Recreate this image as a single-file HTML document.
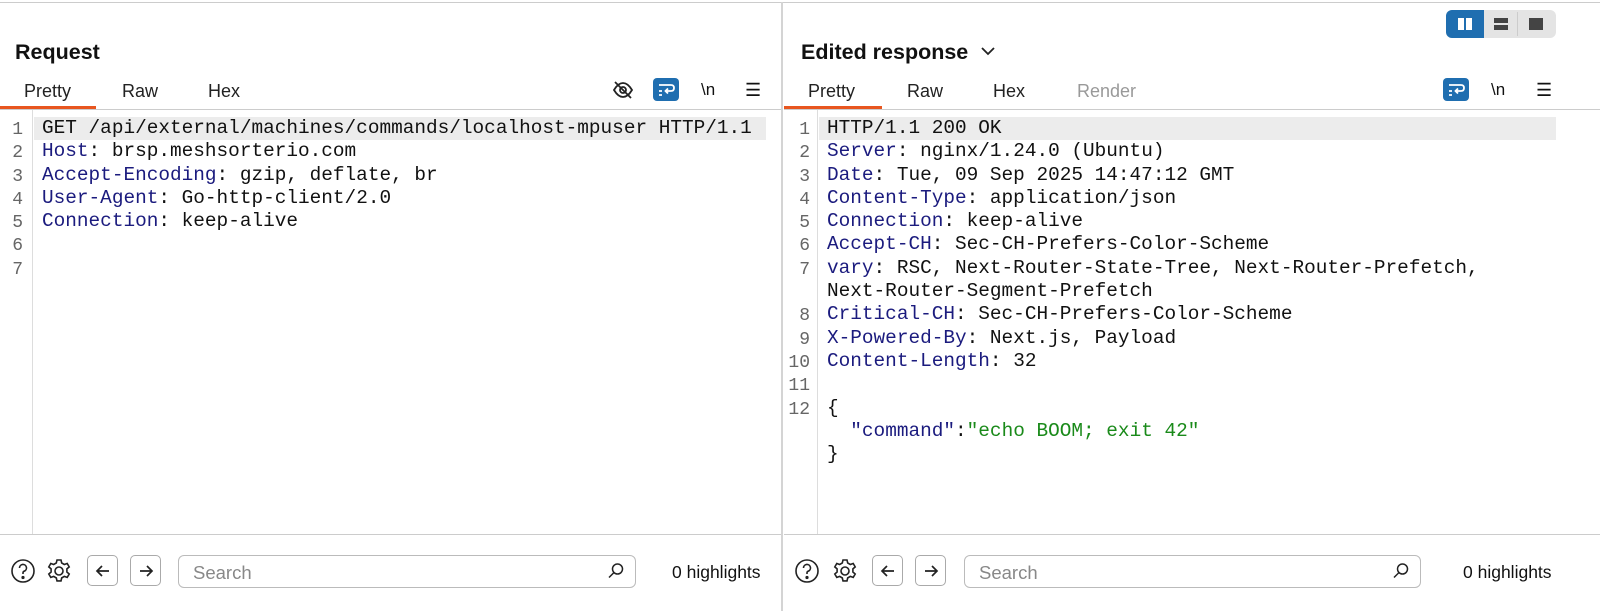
<!DOCTYPE html>
<html><head><meta charset="utf-8"><style>
*{margin:0;padding:0;box-sizing:border-box}
body{width:1600px;height:611px;background:#fff;position:relative;overflow:hidden;font-family:"Liberation Sans",sans-serif;color:#111}
.a{position:absolute}
.hl{background:#ececec}
.code{font-family:"Liberation Mono",monospace;font-size:19.4px;line-height:23.3px;white-space:pre;color:#111}
.k{color:#1b1b7e}
.s{color:#1a8a1a}
.ln{font-family:"Liberation Mono",monospace;font-size:18px;line-height:23.3px;color:#666;text-align:right;white-space:pre}
.tab{font-size:18px;color:#222;top:81px}
.title{font-size:21.5px;font-weight:bold;top:40px;color:#111}
.btn{border:1px solid #aaa;border-radius:5px;width:31px;height:31px;background:#fff;top:555px}
.search{border:1px solid #bbb;border-radius:6px;height:33px;top:555px;font-size:18.5px;color:#888;padding:6px 14px}
.hi{font-size:17.5px;top:562px;color:#111}
</style></head><body>
<div class="a" style="left:0;top:2px;width:1600px;height:1px;background:#ccc"></div>
<div class="a" style="left:781px;top:2px;width:2px;height:609px;background:#d4d4d4"></div>

<!-- LEFT -->
<div class="a title" style="left:15px">Request</div>
<div class="a tab" style="left:24px">Pretty</div>
<div class="a tab" style="left:122px">Raw</div>
<div class="a tab" style="left:208px">Hex</div>
<div class="a" style="left:0;top:106px;width:96px;height:3px;background:#e8561f"></div>
<div class="a" style="left:0;top:109px;width:781px;height:1px;background:#ccc"></div>
<svg class="a" style="left:612px;top:79px" width="22" height="22" viewBox="0 0 22 22" fill="none" stroke="#222" stroke-width="1.8"><path d="M2 11c3-5 6-7 9-7s6 2 9 7c-3 5-6 7-9 7s-6-2-9-7z"/><circle cx="11" cy="11" r="3"/><path d="M3 3l16 16"/></svg>
<div class="a" style="left:653px;top:78px;width:26px;height:23px;background:#1f6eb0;border-radius:4px"></div>
<svg class="a" style="left:656px;top:80px" width="20" height="19" viewBox="0 0 20 19" fill="none" stroke="#fff" stroke-width="1.8"><path d="M3 5h12c2 0 3 1 3 3s-1 3-3 3h-5M12 8.5l-2.5 2.5 2.5 2.5M3 11h3M3 15h3"/></svg>
<div class="a" style="left:701px;top:80px;font-size:17px">\n</div>
<div class="a" style="left:745px;top:80px;font-size:18px">☰</div>

<div class="a" style="left:32px;top:110px;width:1px;height:425px;background:#ddd"></div>
<div class="a hl" style="left:34px;top:117px;width:732px;height:23px"></div>
<div class="a ln" style="left:0;top:119px;width:23px">1
2
3
4
5
6
7</div>
<div class="a code" style="left:42px;top:117px">GET /api/external/machines/commands/localhost-mpuser HTTP/1.1
<span class="k">Host</span>: brsp.meshsorterio.com
<span class="k">Accept-Encoding</span>: gzip, deflate, br
<span class="k">User-Agent</span>: Go-http-client/2.0
<span class="k">Connection</span>: keep-alive</div>
<div class="a" style="left:0;top:534px;width:781px;height:1px;background:#ccc"></div>

<svg class="a" style="left:10px;top:558px" width="26" height="26" viewBox="0 0 26 26" fill="none" stroke="#222" stroke-width="1.6"><circle cx="13" cy="13" r="11"/><path d="M9.5 10a3.5 3.5 0 1 1 4.5 3.3c-.8.3-1 .9-1 1.7v1"/><circle cx="13" cy="19.5" r=".8" fill="#222"/></svg>
<svg class="a" style="left:45px;top:557px" width="28" height="28" viewBox="0 0 28 28" fill="none" stroke="#222" stroke-width="1.6"><path d="M12 3h4l.7 3 2.6 1.5 2.9-1 2 3.4-2.3 2 0 3.1 2.3 2-2 3.4-2.9-1-2.6 1.5-.7 3h-4l-.7-3-2.6-1.5-2.9 1-2-3.4 2.3-2 0-3.1-2.3-2 2-3.4 2.9 1 2.6-1.5z"/><circle cx="14" cy="14" r="4"/></svg>
<div class="a btn" style="left:87px"></div>
<svg class="a" style="left:93px;top:561px" width="20" height="20" viewBox="0 0 20 20" fill="none" stroke="#222" stroke-width="1.7"><path d="M16 10H4M9 5l-5 5 5 5"/></svg>
<div class="a btn" style="left:130px"></div>
<svg class="a" style="left:136px;top:561px" width="20" height="20" viewBox="0 0 20 20" fill="none" stroke="#222" stroke-width="1.7"><path d="M4 10h12M11 5l5 5-5 5"/></svg>
<div class="a search" style="left:178px;width:458px">Search</div>
<svg class="a" style="left:606px;top:561px" width="20" height="20" viewBox="0 0 20 20" fill="none" stroke="#222" stroke-width="1.5"><circle cx="11.5" cy="8" r="5"/><path d="M8 11.5l-5 5"/></svg>
<div class="a hi" style="left:672px">0 highlights</div>

<!-- RIGHT -->
<div class="a" style="left:1446px;top:10px;width:110px;height:28px;background:#e4e4e4;border-radius:6px"></div>
<div class="a" style="left:1446px;top:10px;width:38px;height:28px;background:#1f6eb0;border-radius:6px 0 0 6px"></div>
<div class="a" style="left:1517px;top:12px;width:1px;height:24px;background:#ccc"></div>
<div class="a" style="left:1458px;top:18px;width:6px;height:12px;background:#fff"></div>
<div class="a" style="left:1466px;top:18px;width:6px;height:12px;background:#fff"></div>
<div class="a" style="left:1494px;top:18px;width:14px;height:5px;background:#444"></div>
<div class="a" style="left:1494px;top:25px;width:14px;height:5px;background:#444"></div>
<div class="a" style="left:1529px;top:18px;width:14px;height:12px;background:#444"></div>

<div class="a title" style="left:801px">Edited response</div>
<svg class="a" style="left:979px;top:44px" width="18" height="14" viewBox="0 0 18 14" fill="none" stroke="#222" stroke-width="1.8"><path d="M3 4l6 6 6-6"/></svg>
<div class="a tab" style="left:808px">Pretty</div>
<div class="a tab" style="left:907px">Raw</div>
<div class="a tab" style="left:993px">Hex</div>
<div class="a tab" style="left:1077px;color:#999">Render</div>
<div class="a" style="left:784px;top:106px;width:98px;height:3px;background:#e8561f"></div>
<div class="a" style="left:784px;top:109px;width:816px;height:1px;background:#ccc"></div>
<div class="a" style="left:1443px;top:78px;width:26px;height:23px;background:#1f6eb0;border-radius:4px"></div>
<svg class="a" style="left:1446px;top:80px" width="20" height="19" viewBox="0 0 20 19" fill="none" stroke="#fff" stroke-width="1.8"><path d="M3 5h12c2 0 3 1 3 3s-1 3-3 3h-5M12 8.5l-2.5 2.5 2.5 2.5M3 11h3M3 15h3"/></svg>
<div class="a" style="left:1491px;top:80px;font-size:17px">\n</div>
<div class="a" style="left:1536px;top:80px;font-size:18px">☰</div>

<div class="a" style="left:817px;top:110px;width:1px;height:425px;background:#ddd"></div>
<div class="a hl" style="left:819px;top:117px;width:737px;height:23px"></div>
<div class="a ln" style="left:784px;top:119px;width:26px">1
2
3
4
5
6
7

8
9
10
11
12</div>
<div class="a code" style="left:827px;top:117px">HTTP/1.1 200 OK
<span class="k">Server</span>: nginx/1.24.0 (Ubuntu)
<span class="k">Date</span>: Tue, 09 Sep 2025 14:47:12 GMT
<span class="k">Content-Type</span>: application/json
<span class="k">Connection</span>: keep-alive
<span class="k">Accept-CH</span>: Sec-CH-Prefers-Color-Scheme
<span class="k">vary</span>: RSC, Next-Router-State-Tree, Next-Router-Prefetch,
Next-Router-Segment-Prefetch
<span class="k">Critical-CH</span>: Sec-CH-Prefers-Color-Scheme
<span class="k">X-Powered-By</span>: Next.js, Payload
<span class="k">Content-Length</span>: 32

{
  <span class="k">"command"</span>:<span class="s">"echo BOOM; exit 42"</span>
}</div>
<div class="a" style="left:784px;top:534px;width:816px;height:1px;background:#ccc"></div>

<svg class="a" style="left:794px;top:558px" width="26" height="26" viewBox="0 0 26 26" fill="none" stroke="#222" stroke-width="1.6"><circle cx="13" cy="13" r="11"/><path d="M9.5 10a3.5 3.5 0 1 1 4.5 3.3c-.8.3-1 .9-1 1.7v1"/><circle cx="13" cy="19.5" r=".8" fill="#222"/></svg>
<svg class="a" style="left:831px;top:557px" width="28" height="28" viewBox="0 0 28 28" fill="none" stroke="#222" stroke-width="1.6"><path d="M12 3h4l.7 3 2.6 1.5 2.9-1 2 3.4-2.3 2 0 3.1 2.3 2-2 3.4-2.9-1-2.6 1.5-.7 3h-4l-.7-3-2.6-1.5-2.9 1-2-3.4 2.3-2 0-3.1-2.3-2 2-3.4 2.9 1 2.6-1.5z"/><circle cx="14" cy="14" r="4"/></svg>
<div class="a btn" style="left:872px"></div>
<svg class="a" style="left:878px;top:561px" width="20" height="20" viewBox="0 0 20 20" fill="none" stroke="#222" stroke-width="1.7"><path d="M16 10H4M9 5l-5 5 5 5"/></svg>
<div class="a btn" style="left:915px"></div>
<svg class="a" style="left:921px;top:561px" width="20" height="20" viewBox="0 0 20 20" fill="none" stroke="#222" stroke-width="1.7"><path d="M4 10h12M11 5l5 5-5 5"/></svg>
<div class="a search" style="left:964px;width:457px">Search</div>
<svg class="a" style="left:1391px;top:561px" width="20" height="20" viewBox="0 0 20 20" fill="none" stroke="#222" stroke-width="1.5"><circle cx="11.5" cy="8" r="5"/><path d="M8 11.5l-5 5"/></svg>
<div class="a hi" style="left:1463px">0 highlights</div>
</body></html>
